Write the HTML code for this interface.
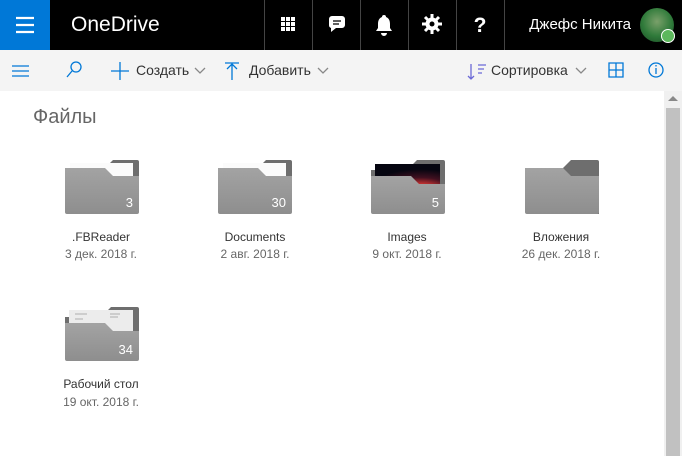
<!DOCTYPE html>
<html><head><meta charset="utf-8"><style>
*{margin:0;padding:0;box-sizing:border-box}
body{width:682px;height:456px;overflow:hidden;background:#fff;font-family:"Segoe UI","Liberation Sans","DejaVu Sans",sans-serif;position:relative}
.hdr{position:absolute;left:0;top:0;width:682px;height:50px;background:#000}
.blue{position:absolute;left:0;top:0;width:50px;height:50px;background:#0078d7}
.sep{position:absolute;top:0;width:1px;height:50px;background:#444}
.cmd{position:absolute;left:0;top:50px;width:682px;height:41px;background:#f4f4f4}
.t{position:absolute;color:#333;font-size:14px;white-space:nowrap}
.f{position:absolute;width:74px;height:54px}
.n{position:absolute;width:150px;text-align:center;font-size:12px;color:#333}
.d{position:absolute;width:150px;text-align:center;font-size:12px;color:#666}
</style></head><body>
<div class="hdr"></div>
<div class="blue"><svg width="50" height="50"><path d="M16 18h18M16 25h18M16 32h18" stroke="#fff" stroke-width="2.2"/></svg></div>
<div class="t" style="left:71px;top:13px;color:#fff;font-size:21px">OneDrive</div>
<div class="sep" style="left:264px"></div><div class="sep" style="left:312px"></div><div class="sep" style="left:360px"></div><div class="sep" style="left:408px"></div><div class="sep" style="left:456px"></div><div class="sep" style="left:504px"></div>
<svg style="position:absolute;left:264px;top:0" width="240" height="50">
<g fill="#fff">
<rect x="17" y="17" width="4" height="4"/><rect x="22" y="17" width="4" height="4"/><rect x="27" y="17" width="4" height="4"/>
<rect x="17" y="22" width="4" height="4"/><rect x="22" y="22" width="4" height="4"/><rect x="27" y="22" width="4" height="4"/>
<rect x="17" y="27" width="4" height="4"/><rect x="22" y="27" width="4" height="4"/><rect x="27" y="27" width="4" height="4"/>
<path d="M65 19a3 3 0 0 1 3-3h10a3 3 0 0 1 3 3v6a3 3 0 0 1-3 3h-6l-5 4v-4a3 3 0 0 1-2-3z"/>
<path d="M120 15a2 2 0 0 1 2 2c3 1 4 4 4 7v4l2 3h-16l2-3v-4c0-3 1-6 4-7a2 2 0 0 1 2-2zM117 33h6a3 3 0 0 1-6 0z"/>
<circle cx="168" cy="24" r="6.5"/>
</g>
<path d="M69 21h8M69 24h6" stroke="#000" stroke-width="1.2"/>
<g stroke="#fff" stroke-width="3"><path d="M168 14v20M158 24h20M161 17l14 14M175 17l-14 14"/></g>
<circle cx="168" cy="24" r="2.5" fill="#000"/>
<text x="216" y="32" fill="#fff" font-size="21" font-weight="bold" text-anchor="middle" font-family="Liberation Sans">?</text>
</svg>
<div class="t" style="right:51px;top:16px;color:#fff;font-size:15px">Джефс Никита</div>
<div style="position:absolute;left:640px;top:8px;width:34px;height:34px;border-radius:50%;background:radial-gradient(circle at 50% 40%,#7aa06a,#2f7a3a 55%,#1a4a25)"></div>
<div style="position:absolute;left:661px;top:29px;width:14px;height:14px;border-radius:50%;background:#5cb85c;border:1.5px solid #fff"></div>
<div class="cmd"></div>
<svg style="position:absolute;left:0;top:50px" width="682" height="41" fill="none" stroke="#0078d7" stroke-width="1.3">
<path d="M12 16h17M12 21h17M12 26h17"/>
<circle cx="76" cy="17" r="5"/><path d="M72 21l-5 6"/>
<path d="M120 12v18M111 21h18"/>
<path d="M232 14v16M225 13h14M227 19l5-5 5 5"/>
<path d="M471 14v15M468 26l3 3 3-3M478 15h8M478 19h6M478 23h4" stroke="#6b69d6"/>
<path d="M609 13h14v14h-14zM616 13v14M609 20h14"/>
<circle cx="656" cy="20" r="7"/><path d="M656 18v6M656 15v1.5"/>
<path d="M195 18l5 5 5-5M318 18l5 5 5-5M576 18l5 5 5-5" stroke="#888"/>
</svg>
<div class="t" style="left:136px;top:62px">Создать</div>
<div class="t" style="left:249px;top:62px">Добавить</div>
<div class="t" style="left:491px;top:62px">Сортировка</div>
<div style="position:absolute;left:664px;top:91px;width:18px;height:365px;background:#f0f0f0"></div>
<div style="position:absolute;left:666px;top:108px;width:14px;height:348px;background:#c1c1c1"></div>
<svg style="position:absolute;left:668px;top:96px" width="10" height="6"><path d="M0 5L5 0 10 5z" fill="#888"/></svg>
<div class="t" style="left:33px;top:106px;font-size:20px;color:#666;font-weight:300">Файлы</div>

<svg width="0" height="0" style="position:absolute"><defs>
<linearGradient id="g" x1="0" y1="0" x2="0" y2="1"><stop offset="0" stop-color="#a3a3a3"/><stop offset="1" stop-color="#8e8e8e"/></linearGradient>
<radialGradient id="sp" cx="0.7" cy="1" r="0.8"><stop offset="0" stop-color="#fff"/><stop offset="0.3" stop-color="#c03030"/><stop offset="0.6" stop-color="#401020"/><stop offset="1" stop-color="#050510"/></radialGradient>
</defs></svg>

<svg class="f" style="left:65px;top:160px" viewBox="0 0 74 54"><path d="M40 8l8-8h24q2 0 2 2v40H40z" fill="#6e6e6e"/><rect x="5" y="3" width="63" height="22" fill="#fbfbfb"/><path d="M0 8h40l8 8h26v36q0 2-2 2H2q-2 0-2-2z" fill="url(#g)"/><text x="68" y="47" fill="#fff" font-size="13" text-anchor="end">3</text></svg>
<svg class="f" style="left:218px;top:160px" viewBox="0 0 74 54"><path d="M40 8l8-8h24q2 0 2 2v40H40z" fill="#6e6e6e"/><rect x="5" y="3" width="63" height="22" fill="#fbfbfb"/><path d="M0 8h40l8 8h26v36q0 2-2 2H2q-2 0-2-2z" fill="url(#g)"/><text x="68" y="47" fill="#fff" font-size="13" text-anchor="end">30</text></svg>
<svg class="f" style="left:371px;top:160px" viewBox="0 0 74 54"><path d="M40 6l6-6h26q2 0 2 2v40H40zM0 10h8v10H0z" fill="#6e6e6e"/><rect x="4" y="4" width="65" height="26" fill="url(#sp)"/><path d="M0 16h40l8 8h26v28q0 2-2 2H2q-2 0-2-2z" fill="url(#g)"/><text x="68" y="47" fill="#fff" font-size="13" text-anchor="end">5</text></svg>
<svg class="f" style="left:525px;top:160px" viewBox="0 0 74 54"><path d="M38 8l8-8h26q2 0 2 2v52H38z" fill="#6e6e6e"/><path d="M0 8h38l8 8h28v36q0 2-2 2H2q-2 0-2-2z" fill="url(#g)"/></svg>
<svg class="f" style="left:65px;top:307px" viewBox="0 0 74 54"><path d="M40 6l6-6h26q2 0 2 2v40H40zM0 10h6v10H0z" fill="#6e6e6e"/><rect x="4" y="3" width="64" height="28" fill="#ececec"/><path d="M10 7h12M10 12h8M10 17h14M10 20h10M45 7h10M45 10h8" stroke="#999" stroke-width="0.8"/><path d="M0 16h40l8 8h26v28q0 2-2 2H2q-2 0-2-2z" fill="url(#g)"/><text x="68" y="47" fill="#fff" font-size="13" text-anchor="end">34</text></svg>

<div class="n" style="left:26px;top:230px">.FBReader</div><div class="d" style="left:26px;top:247px">3 дек. 2018 г.</div>
<div class="n" style="left:180px;top:230px">Documents</div><div class="d" style="left:180px;top:247px">2 авг. 2018 г.</div>
<div class="n" style="left:332px;top:230px">Images</div><div class="d" style="left:332px;top:247px">9 окт. 2018 г.</div>
<div class="n" style="left:486px;top:230px">Вложения</div><div class="d" style="left:486px;top:247px">26 дек. 2018 г.</div>
<div class="n" style="left:26px;top:377px">Рабочий стол</div><div class="d" style="left:26px;top:395px">19 окт. 2018 г.</div>
</body></html>
